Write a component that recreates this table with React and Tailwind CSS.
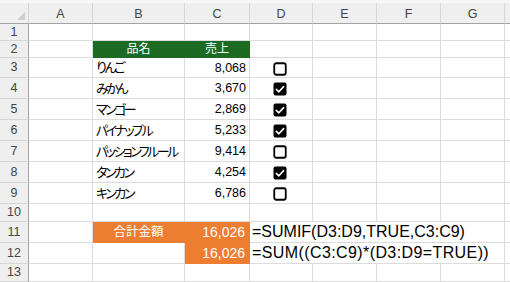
import React from "react";

const FONT = "font-['Liberation_Sans','Noto_Sans_CJK_JP',sans-serif]";
const GRID = "border-[#dcdcdc]";

const items = [
  { name: "りんご", amount: "8,068", checked: false },
  { name: "みかん", amount: "3,670", checked: true },
  { name: "マンゴー", amount: "2,869", checked: true },
  { name: "パイナップル", amount: "5,233", checked: true },
  { name: "パッションフルール", amount: "9,414", checked: false },
  { name: "タンカン", amount: "4,254", checked: true },
  { name: "キンカン", amount: "6,786", checked: false },
];

function Checkbox({ checked }) {
  return (
    <svg width="14" height="14" viewBox="0 0 14 14">
      {checked ? (
        <>
          <rect x="0.5" y="0.5" width="13" height="13" rx="2" fill="#000" />
          <path d="M3.3 7.4 L5.9 9.8 L10.6 4.6" fill="none" stroke="#fff" strokeWidth="1.6" strokeLinecap="round" strokeLinejoin="round" />
        </>
      ) : (
        <rect x="1.25" y="1.25" width="11.5" height="11.5" rx="2" fill="#fff" stroke="#000" strokeWidth="1.8" />
      )}
    </svg>
  );
}

function RowHead({ n, h }) {
  return (
    <div className={`w-[29px] ${h} shrink-0 bg-[#efefef] border-r border-b border-r-[#a3a3a3] border-b-[#d6d6d6] flex items-center justify-center text-[12.5px] text-[#444]`}>
      {n}
    </div>
  );
}

function Blank({ w, h }) {
  return <div className={`${w} ${h} shrink-0 border-r border-b ${GRID}`} />;
}

function Tail({ h }) {
  return <div className={`flex-1 ${h} border-b ${GRID}`} />;
}

function EmptyRest({ h }) {
  return (
    <>
      <Blank w="w-[64px]" h={h} />
      <Blank w="w-[64px]" h={h} />
      <Blank w="w-[64px]" h={h} />
      <Tail h={h} />
    </>
  );
}

export default function App() {
  const cols = [
    { label: "A", w: "w-[64px]" },
    { label: "B", w: "w-[92px]" },
    { label: "C", w: "w-[65px]" },
    { label: "D", w: "w-[63px]" },
    { label: "E", w: "w-[64px]" },
    { label: "F", w: "w-[64px]" },
    { label: "G", w: "w-[64px]" },
  ];

  return (
    <div className={`w-[510px] h-[282px] overflow-hidden bg-white ${FONT} text-black`}>
      <div className="h-[3px] bg-[#f7f7f7]" />

      {/* column headers */}
      <div className="flex h-[21px]">
        <div className="w-[29px] shrink-0 bg-[#efefef] border-r border-b border-r-[#d6d6d6] border-b-[#a3a3a3] flex items-end justify-end pr-[3px] pb-[3px]">
          <svg width="8" height="8" viewBox="0 0 8 8">
            <polygon points="8,0 8,8 0,8" fill="#cfcfcf" />
          </svg>
        </div>
        {cols.map((c) => (
          <div
            key={c.label}
            className={`${c.w} shrink-0 bg-[#efefef] border-r border-b border-r-[#d6d6d6] border-b-[#a3a3a3] flex items-center justify-center pt-[3px] text-[12.5px] text-[#444]`}
          >
            {c.label}
          </div>
        ))}
        <div className="flex-1 bg-[#efefef] border-b border-b-[#a3a3a3]" />
      </div>

      {/* row 1 */}
      <div className="flex">
        <RowHead n={1} h="h-[17px]" />
        <Blank w="w-[64px]" h="h-[17px]" />
        <Blank w="w-[92px]" h="h-[17px]" />
        <Blank w="w-[65px]" h="h-[17px]" />
        <Blank w="w-[63px]" h="h-[17px]" />
        <EmptyRest h="h-[17px]" />
      </div>

      {/* row 2 header */}
      <div className="flex">
        <RowHead n={2} h="h-[17px]" />
        <Blank w="w-[64px]" h="h-[17px]" />
        <div className="w-[92px] h-[17px] shrink-0 bg-[#1d6b23] border-r border-b border-[#1d6b23] flex items-center justify-center text-[12px] text-white">
          品名
        </div>
        <div className="w-[65px] h-[17px] shrink-0 bg-[#1d6b23] border-r border-b border-[#1d6b23] flex items-center justify-center text-[12px] text-white">
          売上
        </div>
        <Blank w="w-[63px]" h="h-[17px]" />
        <EmptyRest h="h-[17px]" />
      </div>

      {/* data rows */}
      {items.map((it, i) => {
        const h = i === 0 ? "h-[20px]" : "h-[21px]";
        return (
          <div key={it.name} className="flex">
            <RowHead n={i + 3} h={h} />
            <Blank w="w-[64px]" h={h} />
            <div className={`w-[92px] ${h} shrink-0 border-r border-b ${GRID} flex items-center pl-[3px] pt-[1px] text-[13px] tracking-[-2.5px] [font-feature-settings:'palt'] whitespace-nowrap`}>
              {it.name}
            </div>
            <div className={`w-[65px] ${h} shrink-0 border-r border-b ${GRID} flex items-center justify-end pr-[3px] pt-[1px] text-[12.5px]`}>
              {it.amount}
            </div>
            <div className={`w-[63px] ${h} shrink-0 border-r border-b ${GRID} flex items-center justify-center pr-[3px] pt-[2px]`}>
              <Checkbox checked={it.checked} />
            </div>
            <EmptyRest h={h} />
          </div>
        );
      })}

      {/* row 10 */}
      <div className="flex">
        <RowHead n={10} h="h-[18px]" />
        <Blank w="w-[64px]" h="h-[18px]" />
        <Blank w="w-[92px]" h="h-[18px]" />
        <Blank w="w-[65px]" h="h-[18px]" />
        <Blank w="w-[63px]" h="h-[18px]" />
        <EmptyRest h="h-[18px]" />
      </div>

      {/* row 11 */}
      <div className="flex">
        <RowHead n={11} h="h-[21px]" />
        <Blank w="w-[64px]" h="h-[21px]" />
        <div className="w-[92px] h-[21px] shrink-0 bg-[#ed7d31] border-r border-b border-[#ed7d31] flex items-center justify-center text-[12.5px] text-white">
          合計金額
        </div>
        <div className="w-[65px] h-[21px] shrink-0 bg-[#ed7d31] border-r border-b border-[#ed7d31] flex items-center justify-end pr-[4px] text-[14px] text-white">
          16,026
        </div>
        <div className={`w-[255px] h-[21px] shrink-0 border-r border-b ${GRID} flex items-center pl-[2px] text-[16px] whitespace-nowrap`}>
          =SUMIF(D3:D9,TRUE,C3:C9)
        </div>
        <Tail h="h-[21px]" />
      </div>

      {/* row 12 */}
      <div className="flex">
        <RowHead n={12} h="h-[21px]" />
        <Blank w="w-[64px]" h="h-[21px]" />
        <Blank w="w-[92px]" h="h-[21px]" />
        <div className="w-[65px] h-[21px] shrink-0 bg-[#ed7d31] border-r border-b border-[#ed7d31] flex items-center justify-end pr-[4px] text-[14px] text-white">
          16,026
        </div>
        <div className={`w-[255px] h-[21px] shrink-0 border-r border-b ${GRID} flex items-center pl-[2px] text-[16px] tracking-[0.4px] whitespace-nowrap`}>
          =SUM((C3:C9)*(D3:D9=TRUE))
        </div>
        <Tail h="h-[21px]" />
      </div>

      {/* row 13 */}
      <div className="flex">
        <RowHead n={13} h="h-[18px]" />
        <Blank w="w-[64px]" h="h-[18px]" />
        <Blank w="w-[92px]" h="h-[18px]" />
        <Blank w="w-[65px]" h="h-[18px]" />
        <Blank w="w-[63px]" h="h-[18px]" />
        <EmptyRest h="h-[18px]" />
      </div>
    </div>
  );
}
